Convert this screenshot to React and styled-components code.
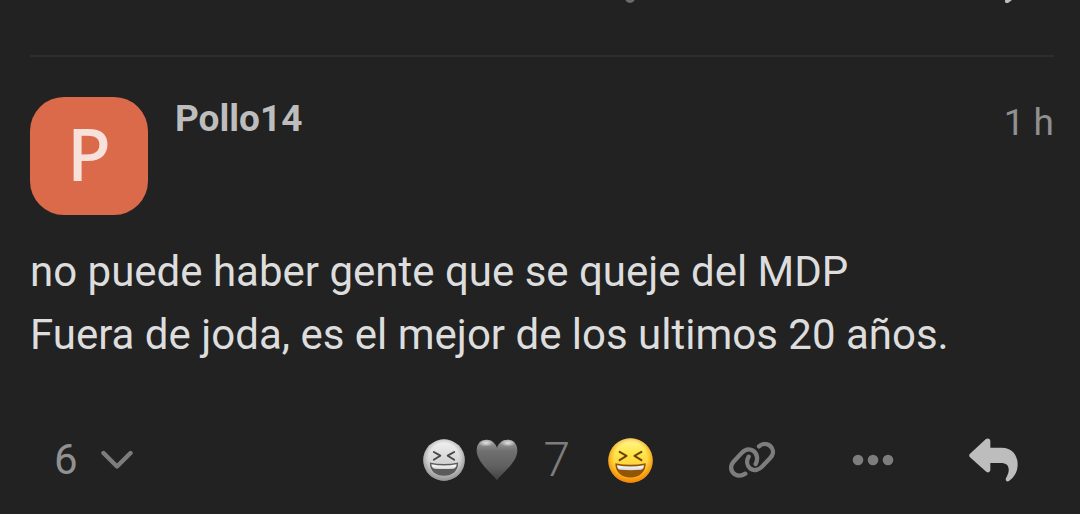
import React, { useState } from 'react';
import styled, { createGlobalStyle } from 'styled-components';

const LaughIcon = ({ id, size }) => (
  <svg width={size} height={size} viewBox="0 0 136 136" aria-hidden="true">
    <defs>
      <linearGradient id={`${id}-face`} x1="0" y1="0" x2="0" y2="1">
        <stop offset="0" stopColor="#fff79a" />
        <stop offset="0.3" stopColor="#ffe84f" />
        <stop offset="0.7" stopColor="#ffcd35" />
        <stop offset="1" stopColor="#fba41c" />
      </linearGradient>
      <radialGradient id={`${id}-edge`} cx="0.5" cy="0.46" r="0.54">
        <stop offset="0.68" stopColor="#f78c00" stopOpacity="0" />
        <stop offset="1" stopColor="#f08000" stopOpacity="0.85" />
      </radialGradient>
      <linearGradient id={`${id}-teeth`} x1="0" y1="0" x2="0" y2="1">
        <stop offset="0" stopColor="#ffffff" />
        <stop offset="1" stopColor="#d2d6e0" />
      </linearGradient>
    </defs>
    <circle cx="68" cy="68" r="67" fill={`url(#${id}-face)`} />
    <circle cx="68" cy="68" r="67" fill={`url(#${id}-edge)`} />
    <path
      d="M35 42L56 54L35 67M101 42L80 54L101 67"
      fill="none"
      stroke="#6f4205"
      strokeWidth="6"
      strokeLinecap="round"
      strokeLinejoin="round"
    />
    <path
      d="M22 76Q68 86 114 76C114 104 94 119 68 119C42 119 22 104 22 76Z"
      fill="#925405"
    />
    <path d="M27 82Q68 90 109 82Q108 95 98 96Q68 99 38 96Q28 95 27 82Z" fill={`url(#${id}-teeth)`} />
  </svg>
);

const HeartIcon = () => (
  <svg width="42" height="42" viewBox="0 0 126 126" aria-hidden="true">
    <defs>
      <linearGradient id="heart-fill" x1="0" y1="0" x2="0" y2="1">
        <stop offset="0" stopColor="#a2a2a2" />
        <stop offset="0.28" stopColor="#707070" />
        <stop offset="0.65" stopColor="#606060" />
        <stop offset="1" stopColor="#404040" />
      </linearGradient>
      <radialGradient id="heart-shine">
        <stop offset="0" stopColor="#f2f2f2" stopOpacity="0.85" />
        <stop offset="1" stopColor="#f2f2f2" stopOpacity="0" />
      </radialGradient>
    </defs>
    <path
      d="M63 125C56 108 4 75 2 36C1 14 15 2 32 2C47 2 58 12 63 26C68 12 79 2 94 2C111 2 125 14 124 36C122 75 70 108 63 125Z"
      fill="url(#heart-fill)"
    />
    <ellipse cx="30" cy="12" rx="23" ry="11" fill="url(#heart-shine)" />
    <ellipse cx="96" cy="12" rx="23" ry="11" fill="url(#heart-shine)" />
  </svg>
);

const ChevronIcon = () => (
  <svg width="32" height="20" viewBox="0 0 32 20" fill="none" aria-hidden="true">
    <path
      d="M2.5 3L16 16.5L29.5 3"
      stroke="currentColor"
      strokeWidth="4.4"
      strokeLinecap="round"
      strokeLinejoin="round"
    />
  </svg>
);

const LinkIcon = () => (
  <svg width="46" height="36" viewBox="84 53 138 108" fill="none" aria-hidden="true">
    <path
      d="M133 148C124 154 112 156 102 150C88 141 87 124 97 113L120 88C130 76 144 71 156 79C170 88 171 106 164 119M143 97C136 109 137 124 148 133C160 141 174 137 184 126L207 102C218 91 219 76 208 65C198 57 184 57 174 66"
      stroke="currentColor"
      strokeWidth="13"
      strokeLinecap="round"
    />
  </svg>
);

const DotsIcon = () => (
  <svg width="42" height="12" viewBox="0 0 42 12" fill="currentColor" aria-hidden="true">
    <circle cx="6" cy="6" r="5.3" />
    <circle cx="21" cy="6" r="5.3" />
    <circle cx="36" cy="6" r="5.3" />
  </svg>
);

const ReplyIcon = () => (
  <svg width="49" height="44" viewBox="806 41 147 132" fill="currentColor" aria-hidden="true">
    <path d="M809 88L856 45Q861 40 867 44Q870 46 870 51V70H903C935 70 952 92 952 120C952 146 938 162 926 170C920 174 914 168 917 162C923 150 926 142 925 134C924 120 914 116 900 116H870V136Q870 141 866 143Q861 146 856 141L809 99Q804 93 809 88Z" />
  </svg>
);

const GlobalStyle = createGlobalStyle`
  body {
    margin: 0;
    background: #222222;
    color: #dddddd;
    font-family: Roboto, "Noto Sans", sans-serif;
  }

  button {
    font: inherit;
    color: inherit;
    background: none;
    border: 0;
    padding: 0;
    cursor: pointer;
  }
`;

const Stream = styled.main`
  padding: 0 26px 0 30px;
  border-bottom: 1px solid #1c181b;
`;

// Lower edge of the post above, scrolled out of view
const PreviousPost = styled.div`
  display: flex;
  justify-content: flex-end;
  gap: 370px;
  height: 55px;
  padding-right: 41px;
`;

const Post = styled.article`
  border-top: 2px solid #2d2d2d;
  padding: 40px 0 13px;
`;

const PostHeader = styled.header`
  display: flex;
  align-items: flex-start;
  gap: 27px;
`;

const Avatar = styled.a`
  display: flex;
  justify-content: center;
  width: 118px;
  height: 118px;
  border-radius: 34px;
  background: #db6a4a;
  color: #f8e1db;
  font-family: "Noto Sans", sans-serif;
  font-size: 72px;
  font-weight: 500;
  line-height: 112px;
  text-decoration: none;
`;

const Meta = styled.div`
  flex: 1;
  display: flex;
  justify-content: space-between;
`;

const Username = styled.a`
  color: #bdbdbd;
  font-size: 37px;
  font-weight: 700;
  line-height: 44px;
  text-decoration: none;
`;

const PostDate = styled.time`
  color: #909090;
  font-size: 37px;
  line-height: 52px;
`;

const Body = styled.p`
  margin: 25px 0 0;
  font-size: 42px;
  line-height: 63px;
`;

const Actions = styled.footer`
  display: flex;
  align-items: center;
  justify-content: space-between;
  height: 84px;
  margin-top: 52px;
`;

const ActionGroup = styled.div`
  display: flex;
  align-items: center;
`;

const RepliesButton = styled.button`
  display: flex;
  align-items: center;
  gap: 23px;
  height: 84px;
  padding: 0 24px;
  color: #7d7d7d;
`;

const Count = styled.span`
  color: ${props => (props.$muted ? '#7d7d7d' : '#919191')};
  font-size: ${props => (props.$muted ? 48 : 42)}px;
  font-weight: ${props => (props.$muted ? 300 : 400)};
  line-height: 84px;
`;

const Reactions = styled.button`
  display: flex;
  align-items: center;
  gap: 11px;
  height: 84px;

  ${Count} {
    margin-left: 14px;
  }
`;

const Gray = styled.span`
  display: flex;
  filter: grayscale(1);
`;

const ActionButton = styled.button`
  display: flex;
  align-items: center;
  justify-content: center;
  width: 121px;
  height: 84px;
  color: ${props => (props.$bright ? '#bdbdbd' : '#7d7d7d')};
`;

const App = () => {
  const [open, setOpen] = useState(false);

  return (
    <>
      <GlobalStyle />
      <Stream>
        <PreviousPost aria-hidden="true">
          <svg width="10" height="3" viewBox="0 0 10 3">
            <circle cx="5" cy="-2" r="5" fill="#6b6b6b" />
          </svg>
          <svg width="8" height="3" viewBox="0 0 8 3">
            <path d="M0 0H7L3 3H1Q0 3 0 1Z" fill="#bdbdbd" />
          </svg>
        </PreviousPost>
        <Post>
          <PostHeader>
            <Avatar href="#pollo14">P</Avatar>
            <Meta>
              <Username href="#pollo14">Pollo14</Username>
              <PostDate>1 h</PostDate>
            </Meta>
          </PostHeader>
          <Body>
            no puede haber gente que se queje del MDP
            <br />
            Fuera de joda, es el mejor de los ultimos 20 años.
          </Body>
          <Actions>
            <RepliesButton aria-label="6 respuestas" aria-expanded={open} onClick={() => setOpen(!open)}>
              <Count>6</Count>
              <ChevronIcon />
            </RepliesButton>
            <ActionGroup>
              <Reactions aria-label="7 reacciones">
                <Gray>
                  <LaughIcon id="reaction" size={42} />
                </Gray>
                <HeartIcon />
                <Count $muted>7</Count>
              </Reactions>
              <ActionButton aria-label="Reaccionar">
                <LaughIcon id="react" size={45} />
              </ActionButton>
              <ActionButton aria-label="Copiar enlace">
                <LinkIcon />
              </ActionButton>
              <ActionButton aria-label="Más">
                <DotsIcon />
              </ActionButton>
              <ActionButton $bright aria-label="Responder">
                <ReplyIcon />
              </ActionButton>
            </ActionGroup>
          </Actions>
        </Post>
      </Stream>
    </>
  );
};

export default App;
